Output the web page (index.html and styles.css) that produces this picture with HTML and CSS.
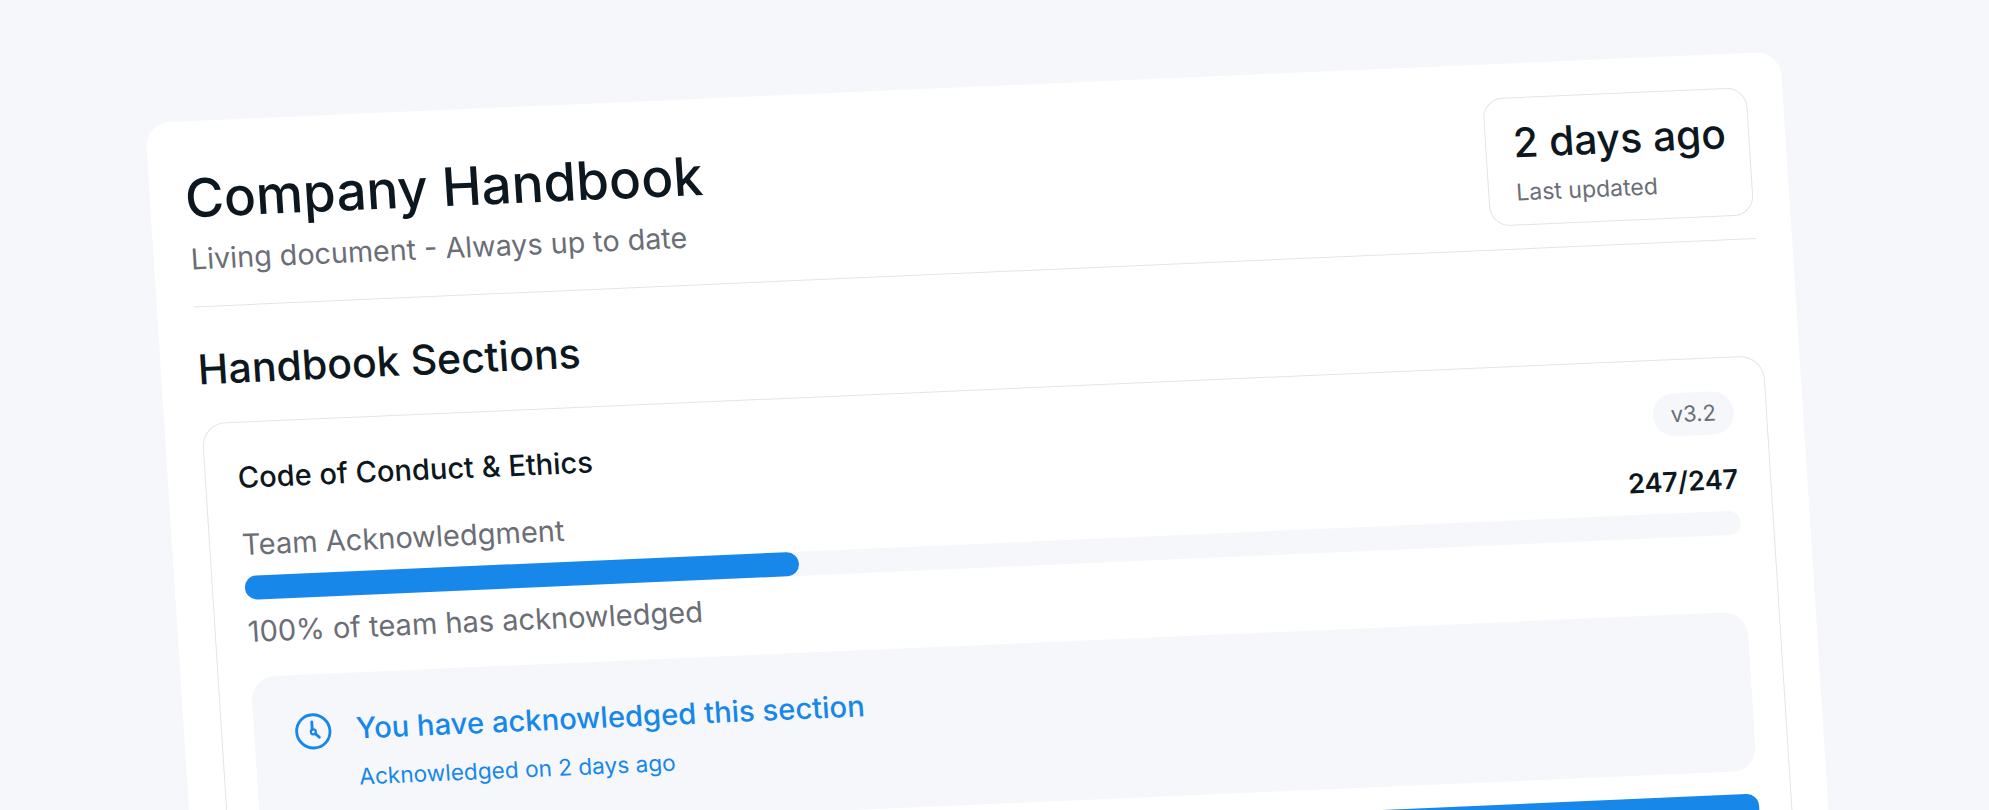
FILE: index.html
```html
<!DOCTYPE html>
<html lang="en">
<head>
    <meta charset="UTF-8">
    <title>Company Handbook</title>
    <link rel="stylesheet" href="styles.css">
</head>
<body>
    <div class="card">
        <header class="header">
            <div class="heading">
                <h1>Company Handbook</h1>
                <p class="subtitle">Living document - Always up to date</p>
            </div>
            <div class="stat">
                <div class="stat-value">2 days ago</div>
                <div class="stat-label">Last updated</div>
            </div>
        </header>

        <h2>Handbook Sections</h2>

        <section class="section">
            <div class="row">
                <h3>Code of Conduct &amp; Ethics</h3>
                <span class="version">v3.2</span>
            </div>
            <div class="row progress-row">
                <span class="progress-label">Team Acknowledgment</span>
                <span class="count">247/247</span>
            </div>
            <div class="track"><div class="fill"></div></div>
            <div class="progress-note">100% of team has acknowledged</div>

            <div class="ack">
                <svg class="ack-icon" viewBox="0 0 40 40" fill="none" stroke="#1787ea" stroke-width="3" stroke-linecap="round">
                    <circle cx="20" cy="20" r="17.5"/>
                    <path d="M19 10v8"/>
                    <circle cx="20" cy="20.5" r="2.6" stroke-width="2.4"/>
                    <path d="M22 22.5l4 4"/>
                </svg>
                <div>
                    <div class="ack-title">You have acknowledged this section</div>
                    <div class="ack-date">Acknowledged on 2 days ago</div>
                </div>
            </div>

            <div class="action"></div>
        </section>
    </div>
</body>
</html>
```

FILE: styles.css
```css
* {
    box-sizing: border-box;
}
body {
    margin: 0;
    height: 810px;
    overflow: hidden;
    background: #f5f7fb;
    font-family: Inter, "Liberation Sans", sans-serif;
    color: #0d1720;
}
/* the whole card is tilted, so it is one matrix and everything inside flows */
.card {
    width: 1635px;
    margin: 123px 0 0 145px;
    padding: 34px 36px 40px 37px;
    background: #fff;
    border-radius: 24px;
    transform-origin: 0 0;
    transform: matrix(1, -0.0437, 0.064, 1, 0, 0);
}
.header {
    display: flex;
    justify-content: space-between;
    align-items: flex-start;
    padding-bottom: 23px;
    border-bottom: 1px solid #e1e4e9;
}
.heading {
    padding-top: 13px;
}
h1 {
    margin: 0;
    font-size: 53px;
    line-height: 60px;
    font-weight: 500;
    margin-left: -2px;
}
.subtitle {
    margin: 14px 0 0;
    font-size: 28.7px;
    line-height: 34px;
    color: #6b6e76;
}
.stat {
    width: 264px;
    height: 128px;
    padding: 22px 27px;
    border: 1.5px solid #e1e4e9;
    border-radius: 20px;
}
.stat-value {
    font-size: 40.7px;
    line-height: 46px;
    font-weight: 500;
    white-space: nowrap;
}
.stat-label {
    margin-top: 12px;
    font-size: 23px;
    line-height: 28px;
    color: #6b6e76;
}
h2 {
    margin: 38px 0 30px;
    font-size: 41px;
    line-height: 48px;
    font-weight: 500;
}
.section {
    padding: 33px 32px 32px;
    border: 1.5px solid #e1e4e9;
    border-radius: 24px;
}
.row {
    display: flex;
    justify-content: space-between;
    align-items: center;
}
.progress-row {
    margin-top: 28px;
}
.version {
    padding: 6px 18px;
    background: #f5f7fb;
    border-radius: 22px;
    font-size: 22px;
    line-height: 31px;
    color: #6b6e76;
}
h3 {
    margin: 0;
    font-size: 29px;
    line-height: 36px;
    font-weight: 500;
}
.count {
    font-size: 27px;
    line-height: 36px;
    font-weight: 600;
}
.progress-label {
    font-size: 29px;
    line-height: 36px;
    color: #6b6e76;
}
.track {
    height: 24px;
    margin-top: 13px;
    background: #f5f7fb;
    border-radius: 12px;
}
.fill {
    width: 37%;
    height: 100%;
    background: #1787ea;
    border-radius: 12px;
}
.progress-note {
    margin-top: 14px;
    font-size: 29px;
    line-height: 36px;
    color: #6b6e76;
}
.ack {
    display: flex;
    align-items: flex-start;
    gap: 24px;
    height: 159px;
    margin-top: 27px;
    padding: 38px 40px 0;
    background: #f5f7fb;
    border-radius: 24px;
    color: #1787ea;
}
.ack-icon {
    width: 38px;
    height: 38px;
    flex-shrink: 0;
}
.ack-title {
    font-size: 29.2px;
    line-height: 36px;
    font-weight: 500;
}
.ack-date {
    margin-top: 16px;
    font-size: 22.6px;
    line-height: 28px;
}
.action {
    height: 72px;
    margin-top: 23px;
    border-radius: 12px;
    background: #1787ea;
}
```
